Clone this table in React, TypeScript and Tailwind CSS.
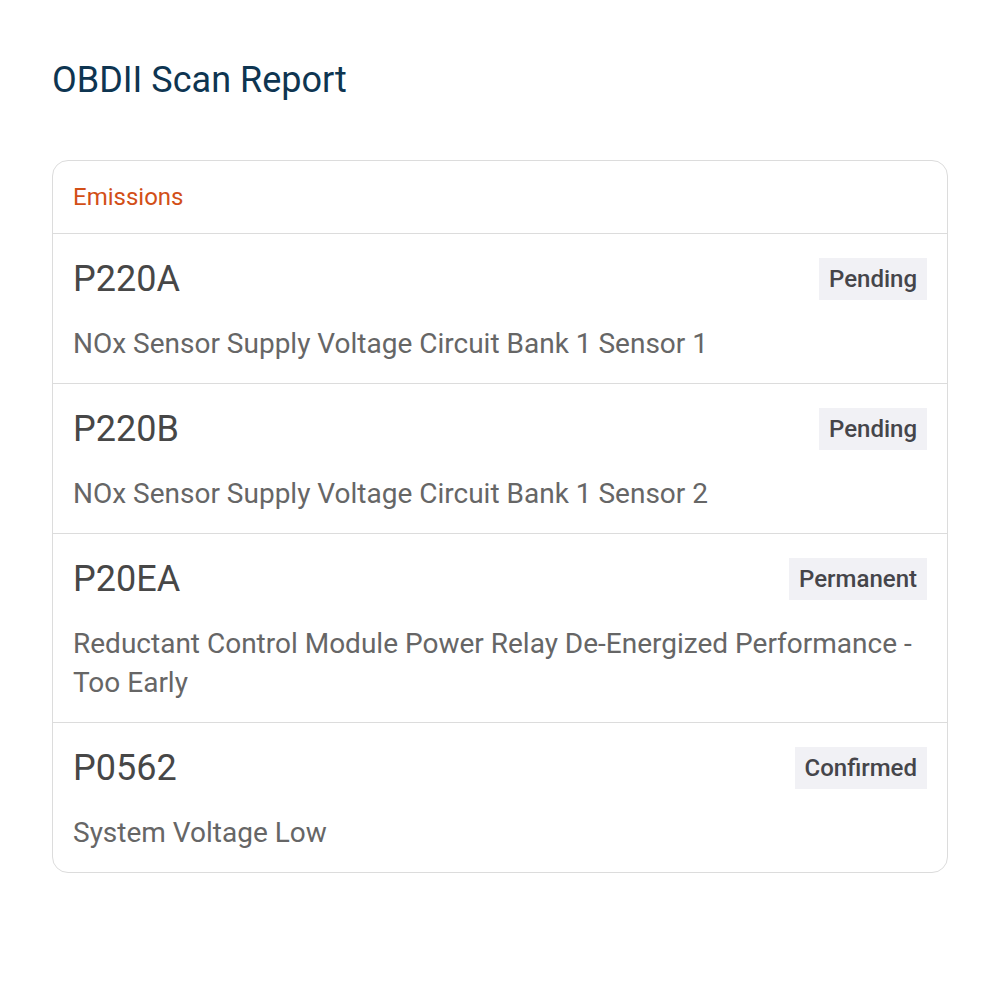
const codes = [
  {
    code: "P220A",
    status: "Pending",
    description: "NOx Sensor Supply Voltage Circuit Bank 1 Sensor 1",
  },
  {
    code: "P220B",
    status: "Pending",
    description: "NOx Sensor Supply Voltage Circuit Bank 1 Sensor 2",
  },
  {
    code: "P20EA",
    status: "Permanent",
    description: "Reductant Control Module Power Relay De-Energized Performance - Too Early",
  },
  {
    code: "P0562",
    status: "Confirmed",
    description: "System Voltage Low",
  },
];

export default function App() {
  return (
    <div
      className="min-h-screen bg-white px-[52px] pt-[58px]"
      style={{ fontFamily: "Roboto, 'Noto Sans', sans-serif" }}
    >
      <h1 className="text-[36px] leading-[44px] text-[#0e3551]">OBDII Scan Report</h1>

      <div className="mt-[58px] rounded-2xl border border-[#dcdcdc] overflow-hidden">
        <div className="px-5 py-6 text-[24px] leading-6 text-[#d24f17]">Emissions</div>

        {codes.map((item) => (
          <div key={item.code} className="border-t border-[#dcdcdc] px-5 pt-6 pb-[20px]">
            <div className="flex items-center justify-between">
              <span className="text-[36px] leading-[42px] text-[#474747]">{item.code}</span>
              <span className="bg-[#f1f1f5] px-[10px] text-[24px] leading-[42px] font-medium text-[#45454a]">
                {item.status}
              </span>
            </div>
            <p className="mt-[24px] text-[28px] leading-[39px] text-[#666666]">{item.description}</p>
          </div>
        ))}
      </div>
    </div>
  );
}
